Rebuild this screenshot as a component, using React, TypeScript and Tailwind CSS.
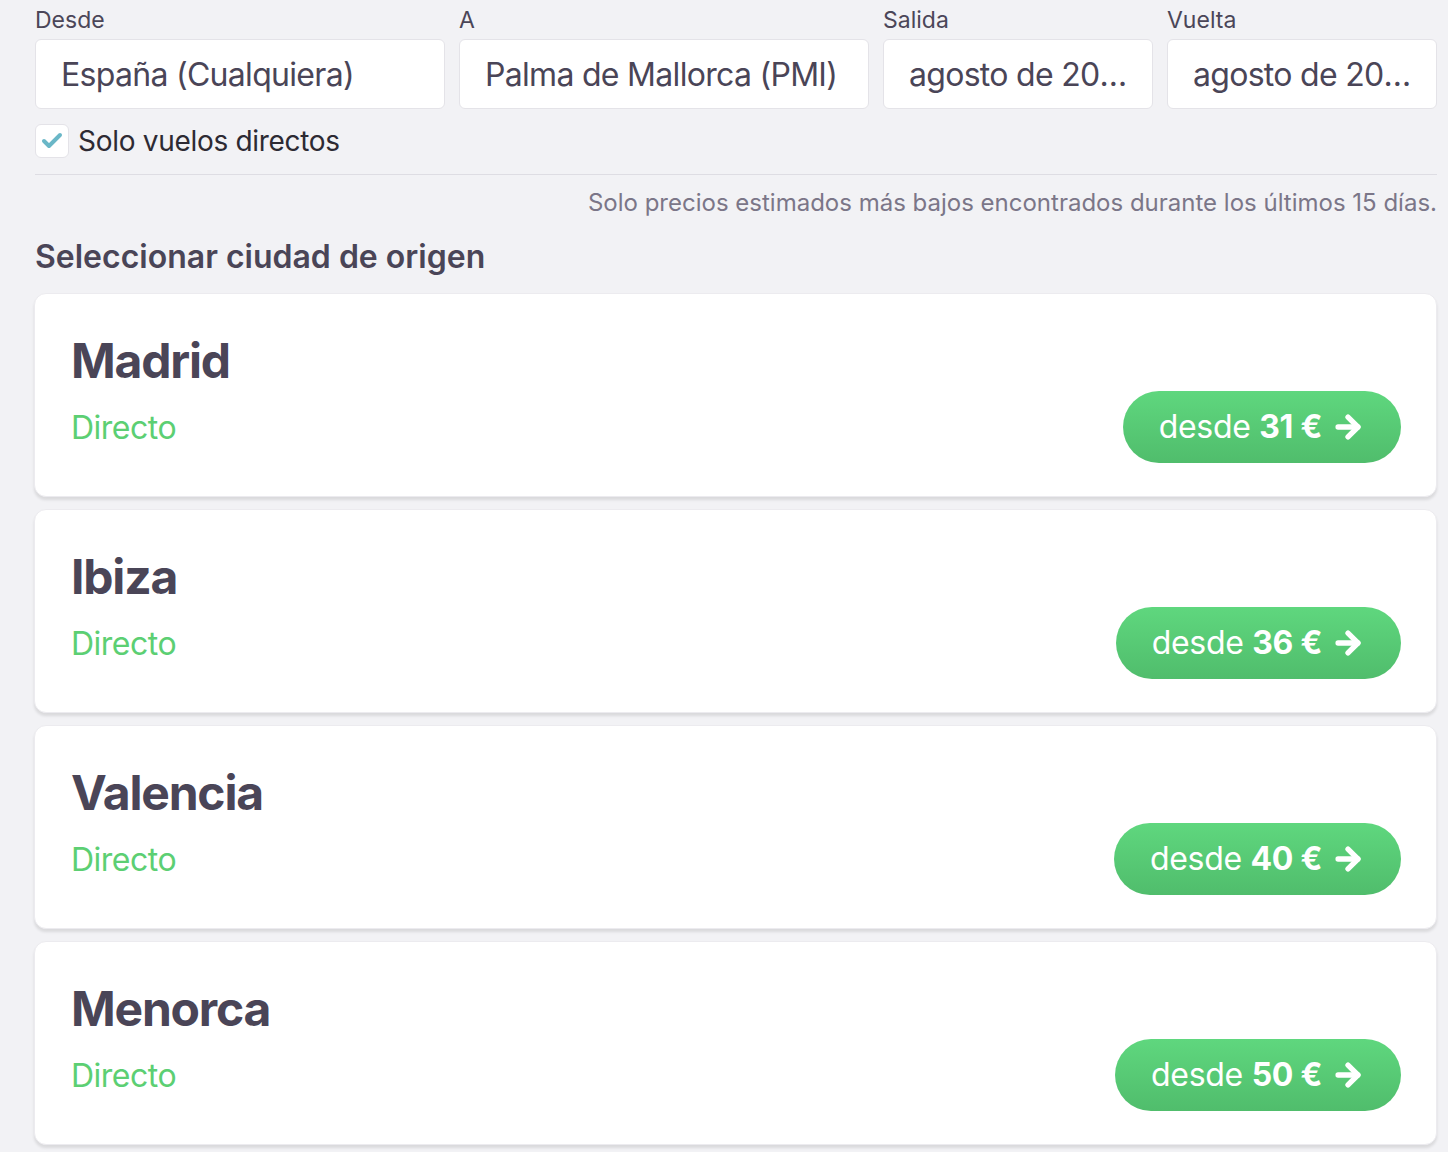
import React from 'react';
import { ArrowRight, Check } from 'lucide-react';

interface Origin {
  city: string;
  price: number;
}

const origins: Origin[] = [
  { city: 'Madrid', price: 31 },
  { city: 'Ibiza', price: 36 },
  { city: 'Valencia', price: 40 },
  { city: 'Menorca', price: 50 },
];

const Field: React.FC<{ label: string; value: string; className: string }> = ({ label, value, className }) => (
  <div className={className}>
    <label className="block text-[23px] leading-[28px] text-[#4b4658] mb-[5px]">{label}</label>
    <div className="h-[70px] bg-white border border-[#e4e3e8] rounded-[6px] flex items-center pl-[25px] pr-[24px]">
      <span className="truncate text-[32px] leading-[40px] pt-[1px] tracking-[-0.7px] text-[#4a4557]">{value}</span>
    </div>
  </div>
);

const OriginCard: React.FC<{ origin: Origin }> = ({ origin }) => (
  <div className="bg-white rounded-[12px] border border-[#ecebef] shadow-[0_3px_3px_rgba(0,0,0,0.10)] pl-[36px] pr-[35px] pt-[37px] pb-[33px]">
    <h3 className="text-[48px] leading-[60px] font-bold text-[#4a4557] tracking-[-1.2px]">{origin.city}</h3>
    <div className="flex items-center justify-between">
      <span className="text-[32px] text-[#5ccf73] tracking-[-0.5px] pt-[2px]">Directo</span>
      <button className="h-[72px] px-[36px] rounded-full bg-gradient-to-b from-[#5fd77e] to-[#50bd6c] text-white text-[32px] tracking-[-0.3px] flex items-center gap-[9px]">
        <span>
          desde <span className="font-bold">{origin.price} €</span>
        </span>
        <ArrowRight className="w-[34px] h-[34px]" strokeWidth={3.75} />
      </button>
    </div>
  </div>
);

export default function App() {
  return (
    <div className="min-h-screen bg-[#f2f2f5] pl-[35px] pr-[11px] pt-[6px] pb-[6px]" style={{ fontFamily: 'Inter, "Noto Sans", sans-serif' }}>
      <div className="flex gap-[14px]">
        <Field label="Desde" value="España (Cualquiera)" className="w-[410px]" />
        <Field label="A" value="Palma de Mallorca (PMI)" className="w-[410px]" />
        <Field label="Salida" value="agosto de 2019" className="w-[270px]" />
        <Field label="Vuelta" value="agosto de 2019" className="w-[270px]" />
      </div>

      <div className="flex items-center gap-[9px] mt-[15px] h-[34px]">
        <div className="w-[34px] h-[34px] bg-white border border-[#e4e3e8] rounded-[6px] flex items-center justify-center">
          <Check className="w-[24px] h-[24px] text-[#6ab7c7]" strokeWidth={4} />
        </div>
        <span className="text-[28px] leading-[34px] tracking-[-0.3px] text-[#2d2a33]">Solo vuelos directos</span>
      </div>

      <div className="border-t border-[#dedde3] mt-[16px]" />

      <p className="text-right text-[24px] leading-[32px] text-[#7b7688] mt-[12px]">
        Solo precios estimados más bajos encontrados durante los últimos 15 días.
      </p>

      <h2 className="text-[32px] leading-[40px] font-semibold text-[#4a4557] mt-[18px]">Seleccionar ciudad de origen</h2>

      <div className="flex flex-col gap-[12px] mt-[16px] -ml-px">
        {origins.map((o) => (
          <OriginCard key={o.city} origin={o} />
        ))}
      </div>
    </div>
  );
}
